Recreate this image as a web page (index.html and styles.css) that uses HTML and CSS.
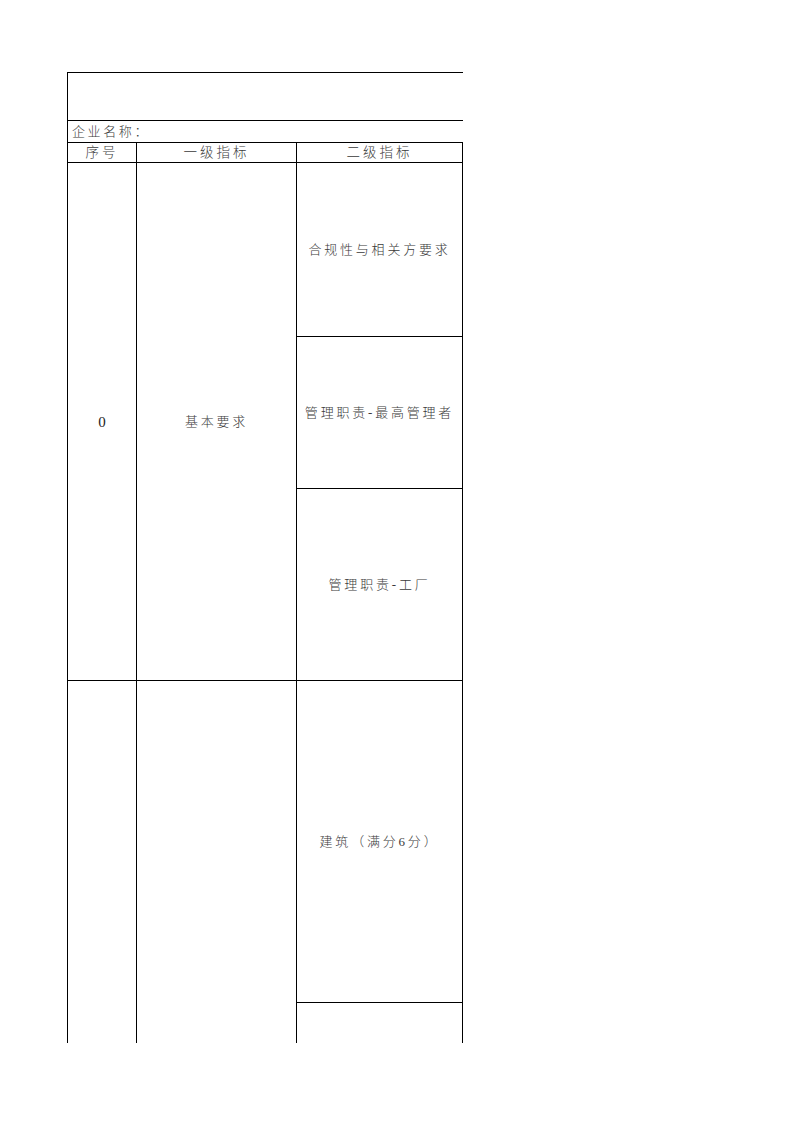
FILE: index.html
```html
<!DOCTYPE html>
<html lang="zh">
<head>
<meta charset="utf-8">
<link rel="stylesheet" href="styles.css">
</head>
<body>
<table class="sheet">
  <colgroup>
    <col class="c1">
    <col class="c2">
    <col class="c3">
  </colgroup>
  <tr class="r-title">
    <td colspan="3" class="title"></td>
  </tr>
  <tr class="r-company">
    <td colspan="3" class="company">企业名称：</td>
  </tr>
  <tr class="r-head">
    <th>序号</th>
    <th>一级指标</th>
    <th>二级指标</th>
  </tr>
  <tr class="r-a">
    <td rowspan="3" class="num">0</td>
    <td rowspan="3">基本要求</td>
    <td>合规性与相关方要求</td>
  </tr>
  <tr class="r-b">
    <td>管理职责-最高管理者</td>
  </tr>
  <tr class="r-c">
    <td>管理职责-工厂</td>
  </tr>
  <tr class="r-d">
    <td rowspan="2" class="open"></td>
    <td rowspan="2" class="open"></td>
    <td>建筑（满分6分）</td>
  </tr>
  <tr class="r-e">
    <td class="open"></td>
  </tr>
</table>
</body>
</html>
```

FILE: styles.css
```css
html, body {
  margin: 0;
  padding: 0;
  background: #ffffff;
}

body {
  padding: 72px 0 0 67px;
  height: 1122px;
  box-sizing: border-box;
  overflow: hidden;
}

.sheet {
  border-collapse: collapse;
  table-layout: fixed;
  width: 395px;
  font-family: "Liberation Serif", "Noto Sans CJK SC", serif;
  font-size: 13px;
  font-weight: 300;
  color: #3a3a3a;
}

.c1 { width: 69px; }
.c2 { width: 160px; }
.c3 { width: 166px; }

.sheet td,
.sheet th {
  border: 1px solid #000;
  padding: 0;
  text-align: center;
  vertical-align: middle;
  font-weight: 300;
  letter-spacing: 2.8px;
  line-height: 16px;
}

.sheet th {
  font-size: 13.5px;
  letter-spacing: 3px;
}

.r-title { height: 48px; }
.r-title .title {
  border-right: none;
}

.r-company { height: 22px; }
.r-company .company {
  text-align: left;
  padding-left: 4px;
  border-right: none;
  letter-spacing: 2.6px;
}

.r-head { height: 20px; }
.r-a { height: 174px; }
.r-b { height: 152px; }
.r-c { height: 192px; }
.r-d { height: 322px; }
.r-e { height: 40px; }

.sheet .num {
  letter-spacing: 0;
  font-size: 15px;
  color: #222;
}

.sheet .open {
  border-bottom: none;
}
```
